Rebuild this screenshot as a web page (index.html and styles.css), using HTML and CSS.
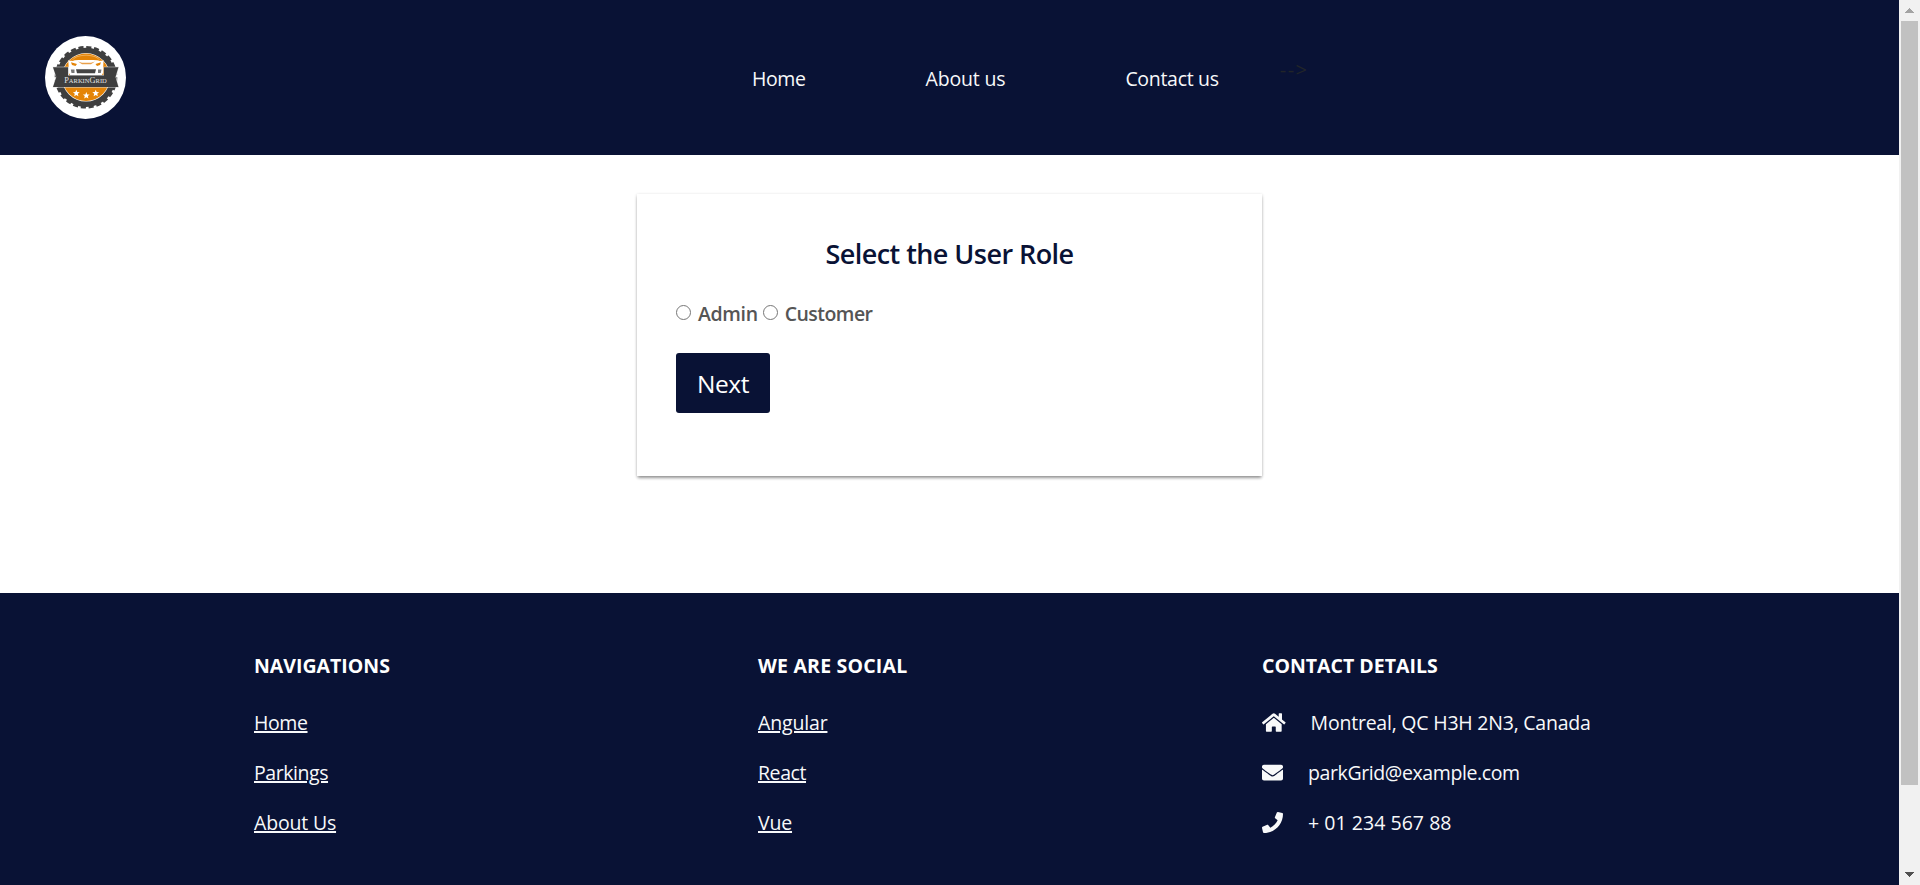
FILE: index.html
```
<!DOCTYPE html>
<html lang="en">
<head>
<meta charset="utf-8">
<title>ParkinGrid</title>
<link rel="stylesheet" href="styles.css">
</head>
<body>
<div class="page">
  <header class="header">
    <svg class="logo" viewBox="0 0 81 83" width="81" height="83" role="img" aria-label="ParkinGrid">
      <ellipse cx="40.5" cy="41.5" rx="40.5" ry="41.5" fill="#fff"/>
      <circle cx="41" cy="41.3" r="29.6" fill="#3f3f3f"/>
      <circle cx="41" cy="41.3" r="29.300" fill="none" stroke="#3f3f3f" stroke-width="4" stroke-dasharray="5 2.671"/>
      <circle cx="41" cy="41.3" r="24.2" fill="#fff"/>
      <circle cx="41" cy="41.3" r="23.7" fill="#e48407"/>
      <path d="M27 24.500Q30 19.500 41 19.200Q52 19.500 55 24.500" fill="none" stroke="#f3b868" stroke-width=".8"/>
      <path d="M23.300 24.500L28 25Q29 24 34 24H48Q53 24 54.500 25L58.500 24.500L58 37Q57.500 39.500 55 39.500H27.500Q24.500 39.500 24 37Z" fill="#fff"/>
      <path d="M33 25.500L37 28.300H46L50 25.500L46 26.800H37Z" fill="#e9a04a"/>
      <path d="M26 26.300L32 28L30.500 30L27 29ZM56 26.300L50.500 28L52 30L55 29Z" fill="#e48407"/>
      <path d="M31 33.300H51L50 37.300H32Z" fill="#444"/>
      <path d="M25.800 33.500H29.500V37H26.500ZM56.500 33.500H53V37H55.800Z" fill="#777"/>
      <path d="M7.600 30.800H24V39H58.500V30.800H74L71.200 41L74 51.500H7.600L10.900 41Z" fill="#ddd"/>
      <path d="M8 31.300H23V39.500H59V31.300H73.400L70.500 41L73.400 51H8L11.300 41Z" fill="#3f3f3f"/>
      <text class="logo-text" x="19.200" y="47.400" textLength="42.600" lengthAdjust="spacingAndGlyphs"><tspan class="cap">P</tspan>ARKIN<tspan class="cap">G</tspan>RID</text>
      <g fill="#fff">
        <path id="star" d="M31.300 53.700L32.250 56.100L34.700 56.200L32.800 57.800L33.400 60.200L31.300 58.900L29.200 60.200L29.800 57.800L27.900 56.200L30.350 56.100Z"/>
        <use href="#star" x="10" y="2.300"/>
        <use href="#star" x="19.400"/>
      </g>
    </svg>
    <nav class="nav">
      <a class="nav-link t-home" href="#">Home</a>
      <a class="nav-link t-about" href="#">About us</a>
      <a class="nav-link t-contact" href="#">Contact us</a>
      <span class="stray">--&gt;</span>
    </nav>
  </header>

  <main class="main">
    <form class="card">
      <h1 class="card-title">Select the User Role</h1>
      <div class="roles">
        <label class="role t-admin"><input class="radio" type="radio" name="role">Admin</label>
        <label class="role t-customer"><input class="radio" type="radio" name="role">Customer</label>
      </div>
      <button class="next" type="button">Next</button>
    </form>
  </main>

  <footer class="footer">
    <section class="col">
      <h2 class="col-title">NAVIGATIONS</h2>
      <p class="row"><a class="t-home" href="#">Home</a></p>
      <p class="row"><a class="t-parkings" href="#">Parkings</a></p>
      <p class="row"><a class="t-about2" href="#">About Us</a></p>
    </section>
    <section class="col">
      <h2 class="col-title t-social">WE ARE SOCIAL</h2>
      <p class="row"><a class="t-angular" href="#">Angular</a></p>
      <p class="row"><a class="t-react" href="#">React</a></p>
      <p class="row"><a class="t-vue" href="#">Vue</a></p>
    </section>
    <section class="col">
      <h2 class="col-title">CONTACT DETAILS</h2>
      <p class="row">
        <svg class="icon icon-home" viewBox="0 0 576 512"><path d="M280.370 148.260L96 300.110V464a16 16 0 0 0 16 16l112.060-.29a16 16 0 0 0 15.920-16V368a16 16 0 0 1 16-16h64a16 16 0 0 1 16 16v95.640a16 16 0 0 0 16 16.050L464 480a16 16 0 0 0 16-16V300L295.670 148.260a12.190 12.190 0 0 0-15.300 0zM571.600 251.470L488 182.560V44.050a12 12 0 0 0-12-12h-56a12 12 0 0 0-12 12v72.610L318.470 43a48 48 0 0 0-61 0L4.340 251.470a12 12 0 0 0-1.600 16.900l25.500 31A12 12 0 0 0 45.150 301l235.220-193.740a12.190 12.190 0 0 1 15.300 0L530.900 301a12 12 0 0 0 16.900-1.600l25.500-31a12 12 0 0 0-1.700-16.930z"/></svg>
        <span class="t-address">Montreal, QC H3H 2N3, Canada</span>
      </p>
      <p class="row">
        <svg class="icon" viewBox="0 0 512 512"><path d="M502.300 190.800c3.900-3.100 9.700-.2 9.700 4.700V400c0 26.500-21.500 48-48 48H48c-26.500 0-48-21.500-48-48V195.600c0-5 5.700-7.800 9.700-4.700 22.400 17.400 52.100 39.500 154.100 113.600 21.100 15.400 56.700 47.800 92.200 47.600 35.700.3 72-32.800 92.300-47.600 102-74.100 131.600-96.300 154-113.700zM256 320c23.200.4 56.600-29.200 73.400-41.400 132.700-96.300 142.800-104.700 173.400-128.700 5.800-4.500 9.200-11.500 9.200-18.900v-19c0-26.500-21.500-48-48-48H48c-26.500 0-48 21.500-48 48v19c0 7.400 3.400 14.300 9.200 18.900 30.600 23.900 40.700 32.400 173.400 128.700 16.800 12.200 50.200 41.800 73.400 41.400z"/></svg>
        <span class="t-mail">parkGrid@example.com</span>
      </p>
      <p class="row">
        <svg class="icon" viewBox="0 0 512 512"><path d="M493.400 24.600l-104-24c-11.300-2.600-22.900 3.300-27.500 13.900l-48 112c-4.200 9.800-1.400 21.300 6.900 28l60.600 49.600c-36 76.700-98.900 140.500-177.200 177.200l-49.600-60.600c-6.800-8.300-18.200-11.100-28-6.900l-112 48C3.900 366.500-2 378.100.6 389.400l24 104C27.100 504.200 36.700 512 48 512c256.100 0 464-207.500 464-464 0-11.200-7.700-20.900-18.600-23.400z"/></svg>
        <span class="t-phone">+ 01 234 567 88</span>
      </p>
    </section>
  </footer>
</div>
<div class="scrollbar" aria-hidden="true">
  <span class="arrow"><svg viewBox="0 0 9 5" width="9" height="5" shape-rendering="crispEdges"><path d="M4 0h1v1h1v1h1v1h1v1h1v1H0V4h1V3h1V2h1V1h1z" fill="#a3a3a3"/></svg></span>
  <span class="thumb"></span>
  <span class="arrow"><svg viewBox="0 0 9 5" width="9" height="5" shape-rendering="crispEdges"><path d="M0 0h9v1H8v1H7v1H6v1H5v1H4V4H3V3H2V2H1V1H0z" fill="#505050"/></svg></span>
</div>
</body>
</html>
```
FILE: styles.css
```
* { box-sizing: border-box; }

body {
  margin: 0;
  height: 885px;
  display: flex;
  overflow: hidden;
  background: #fff;
  font-family: "Open Sans", "Noto Sans", sans-serif;
  font-size: 19.5px;
  line-height: 30px;
}

.page {
  width: 1899px;
  display: flex;
  flex-direction: column;
}

.header {
  height: 155px;
  padding: 36px 0 0 45px;
  display: flex;
  align-items: flex-start;
  background: #091235;
}

.logo { flex: none; }
.logo-text { font-family: "Liberation Serif", serif; font-size: 6.4px; fill: #e4e4e4; }
.logo-text .cap { font-size: 8.2px; }

.nav {
  display: flex;
  align-items: flex-start;
  margin: 28px 0 0 566px;
}
.nav-link {
  padding: 0 60px;
  color: #f8f9fa;
  text-decoration: none;
  white-space: nowrap;
}
.stray {
  margin: -9px 0 0 1px;
  font-size: 20px;
  letter-spacing: 1.5px;
  color: #212529;
}

.main {
  height: 438px;
  display: flex;
  justify-content: center;
  align-items: flex-start;
  padding-top: 39px;
}
.card {
  width: 625px;
  height: 282px;
  padding: 39px 39px;
  background: #fff;
  box-shadow: 0 3px 3px -1px rgba(0, 0, 0, .3), 0 1px 3px rgba(0, 0, 0, .24);
}
.card-title {
  margin: 0 0 22px;
  text-align: center;
  font-size: 27px;
  font-weight: 560;
  line-height: 41px;
  padding-bottom: 1px;
  letter-spacing: -.55px;
  color: #091235;
}
.roles {
  display: flex;
  gap: 5px;
  height: 30px;
  margin: 0 0 24px;
  padding-top: 2px;
  font-weight: 600;
  color: #555;
}
.role { display: flex; height: 30px; }
.radio {
  width: 15px;
  height: 15px;
  margin: 6px 7px 0 0;
}
.next {
  display: block;
  width: 94px;
  height: 60px;
  margin-top: 26px;
  padding: 1px 0 0;
  border: 0;
  border-radius: 3px;
  background: #091235;
  color: #fff;
  font-family: inherit;
  font-size: 24.5px;
  letter-spacing: -.4px;
}

.footer {
  flex: 1;
  display: grid;
  grid-template-columns: repeat(3, 504px);
  align-content: start;
  padding: 58px 0 0 254px;
  background: #091235;
  color: #f8f9fa;
}
.col-title {
  margin: 0 0 27px;
  font-size: 19.5px;
  font-weight: 700;
  line-height: 30px;
  color: #fff;
}
.row {
  display: flex;
  align-items: center;
  gap: 25px;
  height: 30px;
  margin: 0 0 20px;
  white-space: nowrap;
}
.row a {
  color: inherit;
  text-decoration-thickness: 2px;
  text-underline-offset: 1px;
}
.icon { width: 21px; height: 21px; margin-top: -2px; fill: currentColor; }
.icon-home { width: 23.6px; }

/* Per-label tracking */
.t-home { letter-spacing: -.4px; }
.t-about { letter-spacing: -.17px; }
.t-contact { letter-spacing: -.3px; }
.t-admin { letter-spacing: -.35px; }
.t-customer { letter-spacing: -.55px; }
.t-social { letter-spacing: .2px; }
.t-parkings { letter-spacing: -.44px; }
.t-about2 { letter-spacing: -.18px; }
.t-angular { letter-spacing: -.16px; }
.t-react { letter-spacing: -.42px; }
.t-vue { letter-spacing: -.17px; }
.t-address { letter-spacing: -.22px; }
.t-mail { letter-spacing: -.39px; }
.t-phone { letter-spacing: .04px; }

.scrollbar {
  width: 21px;
  height: 885px;
  display: flex;
  flex-direction: column;
  align-items: center;
  background: #f1f1f1;
}
.arrow {
  width: 21px;
  height: 21px;
  display: flex;
  align-items: center;
  justify-content: center;
}
.thumb {
  width: 17px;
  height: 764px;
  margin-bottom: 79px;
  background: #c1c1c1;
}
```
